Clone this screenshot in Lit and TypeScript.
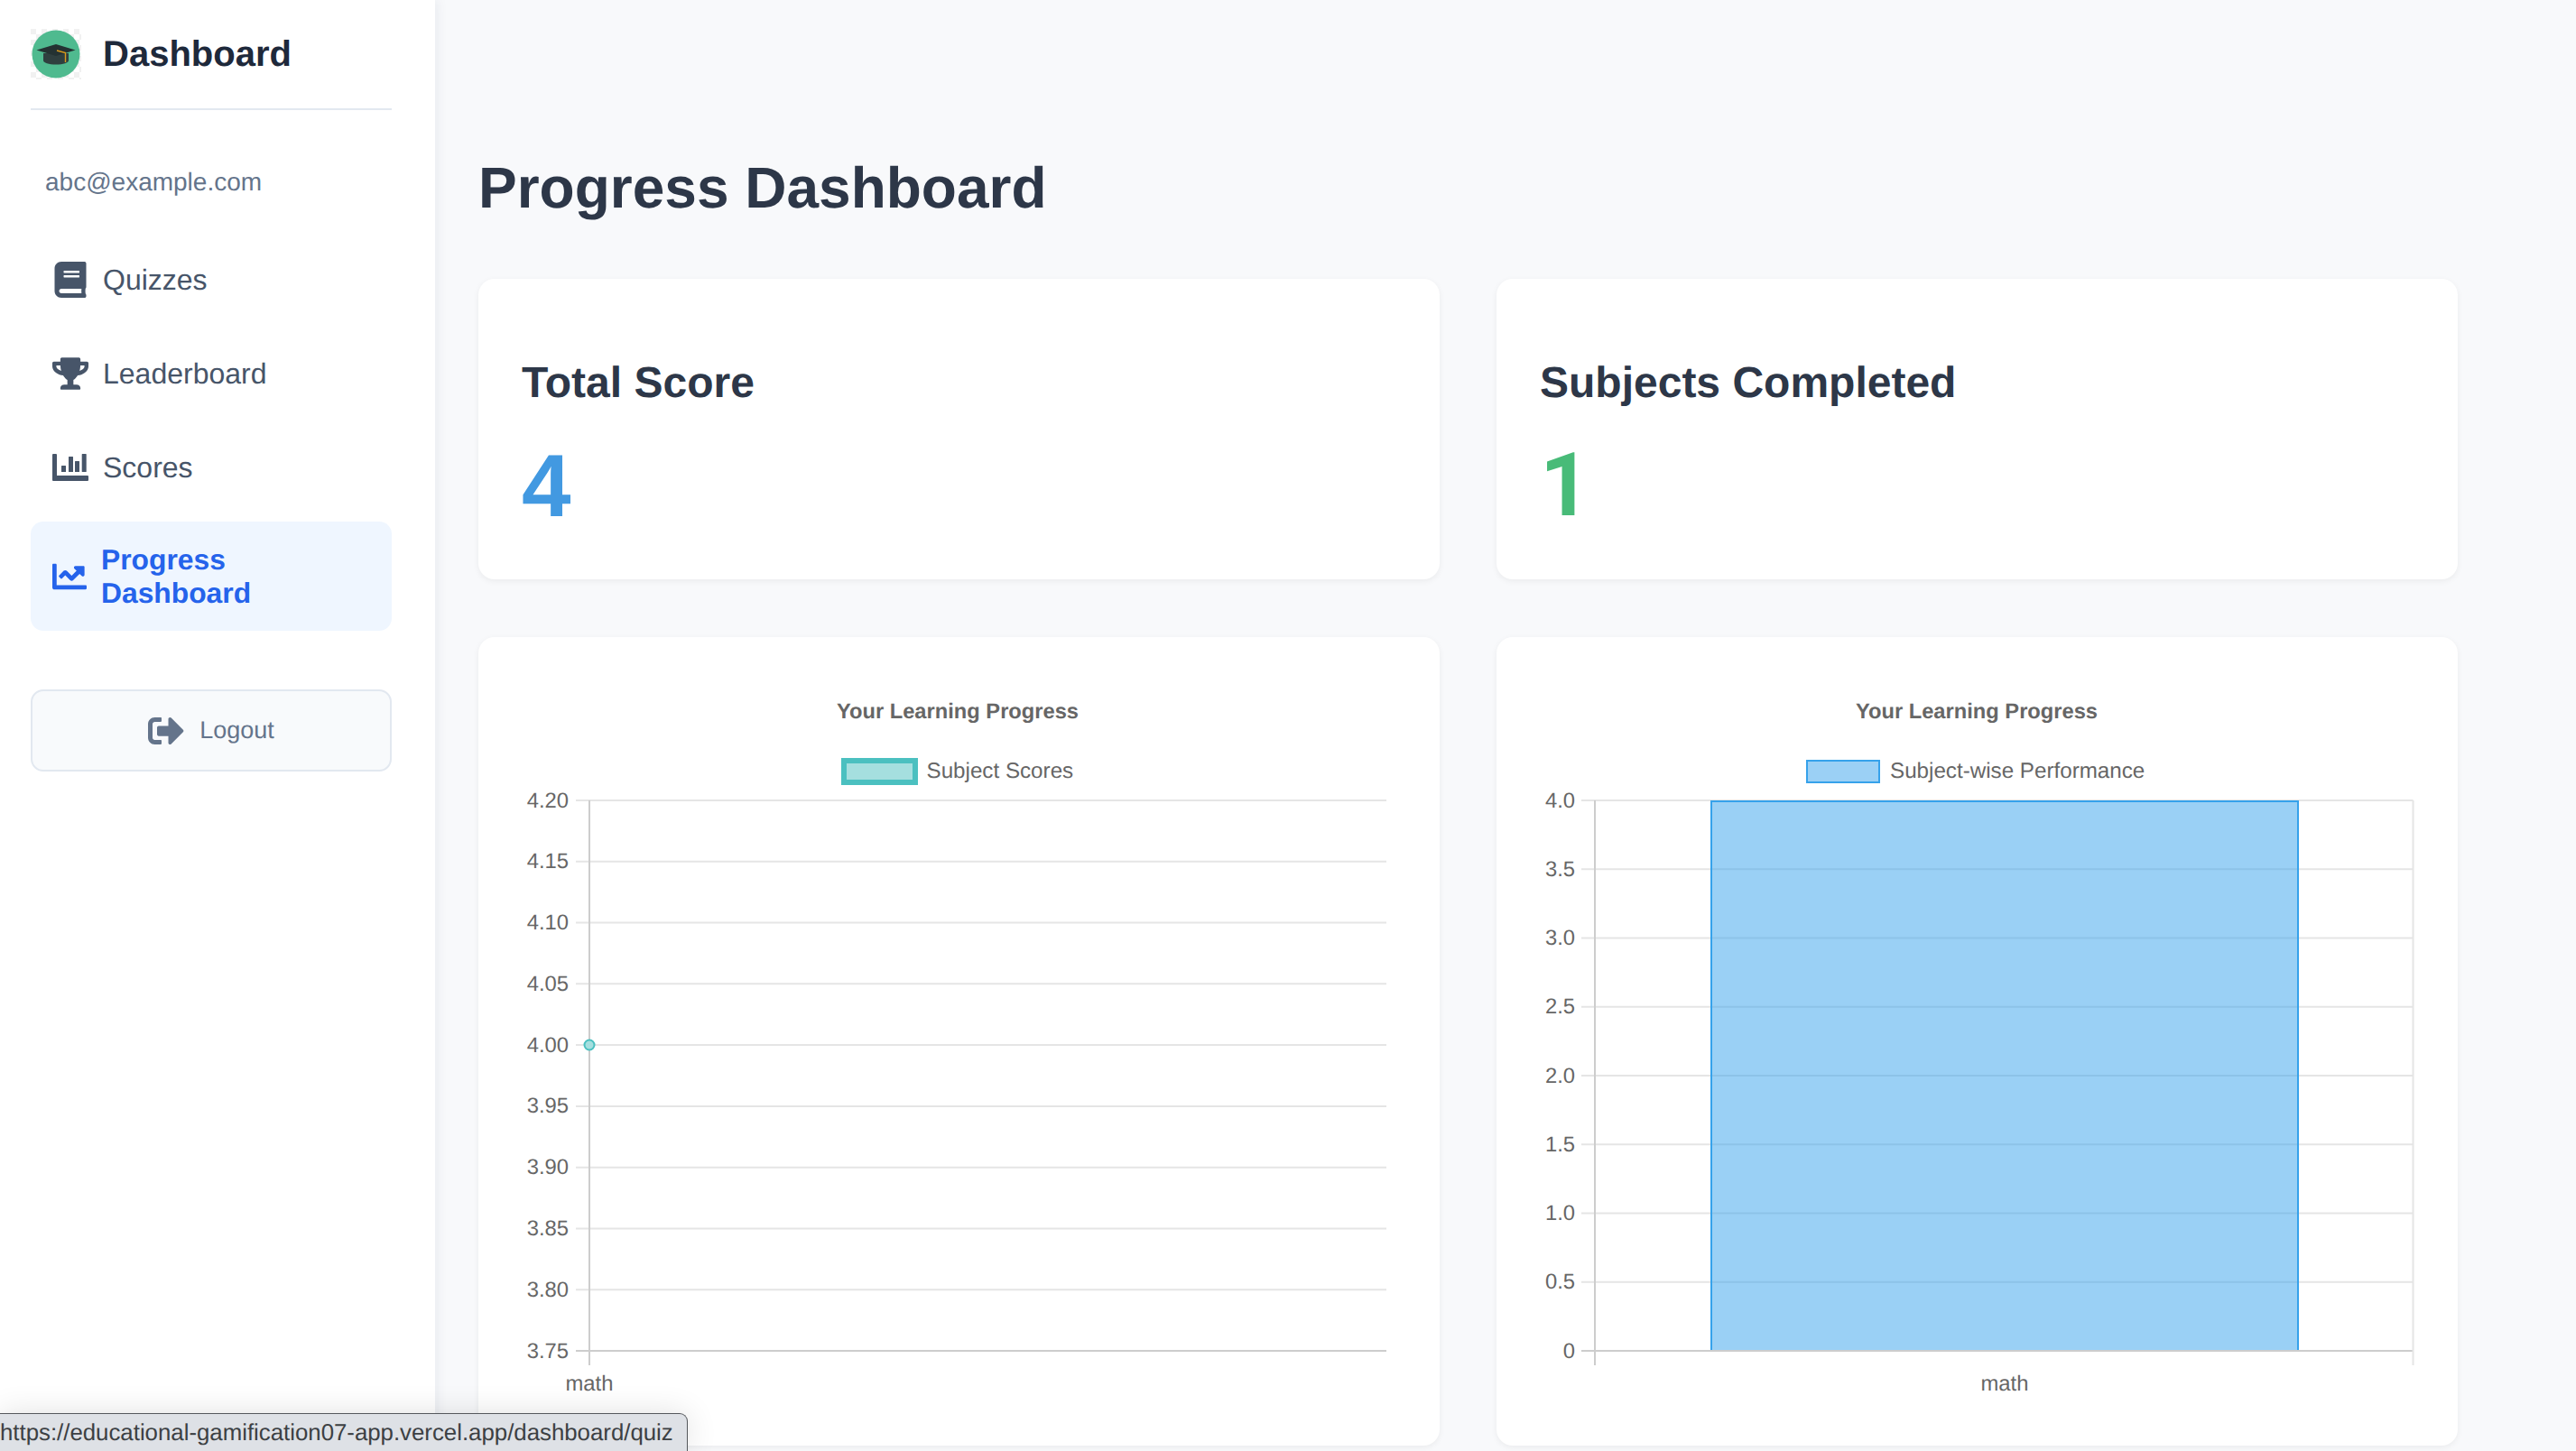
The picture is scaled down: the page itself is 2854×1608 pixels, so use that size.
import { LitElement, html, svg, css } from 'lit'

// icon paths, same shapes as the font-awesome set the sidebar uses
const ICONS = {
  book: ['0 0 448 512', 'M448 360V24c0-13.3-10.7-24-24-24H96C43 0 0 43 0 96v320c0 53 43 96 96 96h328c13.3 0 24-10.7 24-24v-16c0-7.5-3.5-14.3-8.9-18.7-4.2-15.4-4.2-59.3 0-74.7 5.4-4.3 8.9-11.1 8.9-18.6zM128 134c0-3.3 2.7-6 6-6h212c3.3 0 6 2.7 6 6v20c0 3.3-2.7 6-6 6H134c-3.3 0-6-2.7-6-6v-20zm0 64c0-3.3 2.7-6 6-6h212c3.3 0 6 2.7 6 6v20c0 3.3-2.7 6-6 6H134c-3.3 0-6-2.7-6-6v-20zm253.4 250H96c-17.7 0-32-14.3-32-32 0-17.6 14.4-32 32-32h285.4c-1.9 17.1-1.9 46.9 0 64z'],
  trophy: ['0 0 576 512', 'M552 64H448V24c0-13.3-10.7-24-24-24H152c-13.3 0-24 10.7-24 24v40H24C10.7 64 0 74.7 0 88v56c0 35.7 22.5 72.4 61.9 100.7 31.5 22.7 69.8 37.1 110 41.7C203.3 338.5 240 360 240 360v72h-48c-35.3 0-64 20.7-64 56v12c0 6.6 5.4 12 12 12h296c6.6 0 12-5.4 12-12v-12c0-35.3-28.7-56-64-56h-48v-72s36.7-21.5 68.1-73.6c40.3-4.6 78.7-19 110-41.7 39.3-28.3 61.9-65 61.9-100.7V88c0-13.3-10.7-24-24-24zM99.3 192.8C74.9 175.2 64 155.6 64 144v-16h64.2c1 32.6 5.8 61.2 12.8 86.2-15.1-5.2-29.2-12.4-41.7-21.4zM512 144c0 16.1-17.7 36.1-35.3 48.8-12.5 9-26.7 16.2-41.8 21.4 7-25 11.8-53.6 12.8-86.2H512v16z'],
  bars: ['0 0 40 40', 'M1 5h3a1 1 0 0 1 1 1v23h34a1 1 0 0 1 1 1v4a1 1 0 0 1-1 1H1a1 1 0 0 1-1-1V6a1 1 0 0 1 1-1zM10.500 18h4a.5.5 0 0 1 .5.5v6a.5.5 0 0 1-.5.5h-4a.5.5 0 0 1-.5-.5v-6a.5.5 0 0 1 .5-.5zM18.500 8h4a.5.5 0 0 1 .5.5v16a.5.5 0 0 1-.5.5h-4a.5.5 0 0 1-.5-.5v-16a.5.5 0 0 1 .5-.5zM25.500 13h4a.5.5 0 0 1 .5.5v11a.5.5 0 0 1-.5.5h-4a.5.5 0 0 1-.5-.5v-11a.5.5 0 0 1 .5-.5zM33.200 5h4a.5.5 0 0 1 .5.5v19a.5.5 0 0 1-.5.5h-4a.5.5 0 0 1-.5-.5v-19a.5.5 0 0 1 .5-.5z'],
  line: ['0 0 512 512', 'M496 384H64V80c0-8.84-7.16-16-16-16H16C7.16 64 0 71.16 0 80v336c0 17.67 14.33 32 32 32h464c8.84 0 16-7.16 16-16v-32c0-8.84-7.16-16-16-16zM464 96H345.94c-21.38 0-32.09 25.85-16.97 40.97l32.4 32.4L288 242.75l-73.37-73.37c-12.5-12.5-32.76-12.5-45.25 0l-68.69 68.69c-6.25 6.25-6.25 16.38 0 22.63l22.62 22.62c6.25 6.25 16.38 6.25 22.63 0L192 237.25l73.37 73.37c12.5 12.5 32.76 12.5 45.25 0l96-96 32.4 32.4c15.12 15.12 40.97 4.41 40.97-16.97V112c0-8.84-7.16-16-16-16z'],
  logout: ['0 0 512 512', 'M497 273L329 441c-15 15-41 4.500-41-17v-96H152c-13.3 0-24-10.7-24-24v-96c0-13.3 10.7-24 24-24h136V88c0-21.400 25.900-32 41-17l168 168c9.300 9.400 9.300 24.600 0 34zM192 436v-40c0-6.600-5.400-12-12-12H96c-17.700 0-32-14.300-32-32V160c0-17.700 14.300-32 32-32h84c6.600 0 12-5.400 12-12V76c0-6.600-5.400-12-12-12H96c-53 0-96 43-96 96v192c0 53 43 96 96 96h84c6.600 0 12-5.400 12-12z']
}

const icon = (name: keyof typeof ICONS, size = 40) => {
  const [box, d] = ICONS[name]
  return html`<svg class="icon" width=${size} height=${size} viewBox=${box} fill="currentColor"><path d=${d}></path></svg>`
}

// chart geometry is relative to the card
const CHARTS = [
  {
    left: 123, right: 1006, ticks: ['4.20', '4.15', '4.10', '4.05', '4.00', '3.95', '3.90', '3.85', '3.80', '3.75'],
    labelX: 100, tickX: 108, mathX: 123, titleX: 531,
    legend: { x: 402, y: 134, w: 85, h: 30, sw: 6, textX: 496.5, stroke: '#4bc0c0', fill: '#a5dfdf', label: 'Subject Scores' },
    dot: { x: 123, y: 452 }
  },
  {
    left: 109, right: 1015.5, ticks: ['4.0', '3.5', '3.0', '2.5', '2.0', '1.5', '1.0', '0.5', '0'],
    labelX: 87, tickX: 94, mathX: 563, titleX: 532,
    legend: { x: 343, y: 136, w: 82, h: 26, sw: 2, textX: 436, stroke: '#36a2eb', fill: '#9bd0f5', label: 'Subject-wise Performance' },
    bar: { x: 238, w: 650 }
  }
]

const TOP = 181
const BOTTOM = 791
const AXIS_END = 807

class AppRoot extends LitElement {
  static get styles () {
    return css`
      :host {
        display: flex;
        position: relative;
        width: 2854px;
        height: 1608px;
        overflow: hidden;
        background: #f8f9fb;
        font-family: "Liberation Sans", Arial, sans-serif;
        text-rendering: geometricPrecision;
      }

      .sidebar {
        flex: none;
        box-sizing: border-box;
        width: 482px;
        height: 100%;
        padding: 32px 48px 0 34px;
        background: #fff;
        box-shadow: 2px 0 12px rgba(30, 50, 90, 0.08);
      }

      .brand {
        display: flex;
        align-items: center;
        gap: 24px;
        height: 56px;
        padding-bottom: 32px;
        border-bottom: 2px solid #e2e8f0;
      }

      .brand span {
        font-size: 40px;
        font-weight: 700;
        color: #1e293b;
      }

      .email {
        margin: 62px 0 0 16px;
        font-size: 28px;
        line-height: 36px;
        color: #64748b;
      }

      nav {
        display: flex;
        flex-direction: column;
        gap: 18px;
        margin-top: 47px;
      }

      .item {
        display: flex;
        align-items: center;
        gap: 16px;
        padding: 23px 24px;
        border-radius: 14px;
        font-size: 32px;
        line-height: 37px;
        color: #475569;
      }

      .item.active {
        padding: 23.5px 24px;
        margin-top: -1px;
        background: #eff6ff;
        color: #2563eb;
        font-size: 31.8px;
        font-weight: 700;
      }

      .item.active .icon {
        width: 38px;
      }

      .icon {
        flex: none;
        display: block;
      }

      .logout {
        display: flex;
        align-items: center;
        justify-content: center;
        gap: 17px;
        box-sizing: border-box;
        height: 91px;
        margin-top: 65px;
        border: 2px solid #e2e8f0;
        border-radius: 14px;
        background: #f8fafc;
        font-size: 27px;
        color: #64748b;
      }

      main {
        flex: none;
        width: 2193px;
        margin-left: 48px;
      }

      h1 {
        margin: 170px 0 63px;
        font-size: 64px;
        line-height: 76px;
        font-weight: 700;
        color: #2d3748;
      }

      .grid {
        display: grid;
        grid-template-columns: 1065px 1065px;
        gap: 64px 63px;
      }

      .card {
        border-radius: 18px;
        background: #fff;
        box-shadow: 0 2px 7px rgba(0, 0, 0, 0.06);
      }

      .stat {
        box-sizing: border-box;
        height: 333px;
        padding: 87px 48px 0;
      }

      .stat h3 {
        margin: 0 0 30px;
        font-size: 48px;
        line-height: 57px;
        font-weight: 700;
        color: #2d3748;
      }

      .stat .value {
        font-size: 98px;
        line-height: 110px;
        font-weight: 700;
      }

      .blue { color: #4299e1; }

      /* Liberation's 1 has a foot, the reference one does not */
      .green {
        color: #48bb78;
        font-family: Roboto, sans-serif;
      }

      .chart {
        height: 896px;
      }

      .chart svg {
        display: block;
      }

      .chart text {
        font-family: "Liberation Sans", Arial, sans-serif;
        font-size: 23.8px;
        fill: #666;
      }

      .chart text.title {
        font-size: 23.7px;
        font-weight: 700;
      }

      .chart text.legend {
        font-size: 24.2px;
      }

      .status {
        position: absolute;
        left: 0;
        bottom: 0;
        box-sizing: border-box;
        width: 762px;
        height: 42px;
        border: 1.5px solid #55585c;
        border-width: 1.5px 1.5px 0 0;
        border-top-right-radius: 9px;
        background: #dee1e6;
        box-shadow: 0 0 34px rgba(0, 0, 0, 0.12);
        font-size: 25.8px;
        line-height: 42px;
        color: #3c4043;
        white-space: nowrap;
        overflow: hidden;
      }
    `
  }

  renderLogo () {
    return html`
      <svg width="56" height="56" viewBox="0 0 56 56">
        <defs>
          <pattern id="check" width="12" height="12" patternUnits="userSpaceOnUse">
            <rect width="6" height="6" fill="#f1f1f1"></rect>
            <rect x="6" y="6" width="6" height="6" fill="#f1f1f1"></rect>
          </pattern>
        </defs>
        <rect width="56" height="56" fill="url(#check)"></rect>
        <circle cx="28" cy="28" r="26.5" fill="#4fba8f"></circle>
        <path d="M14 27v8c0 2.5 6 4.5 14 4.5s14-2 14-4.5v-8z" fill="#2f3f3f"></path>
        <path d="M6.5 23.5 28 17l21.5 6.5L28 30z" fill="#243232"></path>
        <path d="M29 24l9.500 2.500V37" fill="none" stroke="#d99a1c" stroke-width="1.4"></path>
      </svg>
    `
  }

  renderChart (c: typeof CHARTS[number]) {
    const step = (BOTTOM - TOP) / (c.ticks.length - 1)
    return html`
      <div class="card chart">
        <svg width="1065" height="896" viewBox="0 0 1065 896">
          <text class="title" x=${c.titleX} y="90" text-anchor="middle">Your Learning Progress</text>
          <rect x=${c.legend.x + c.legend.sw / 2} y=${c.legend.y + c.legend.sw / 2}
            width=${c.legend.w - c.legend.sw} height=${c.legend.h - c.legend.sw}
            fill=${c.legend.fill} stroke=${c.legend.stroke} stroke-width=${c.legend.sw}></rect>
          <text class="legend" x=${c.legend.textX} y="156">${c.legend.label}</text>
          ${c.ticks.map((t, i) => {
            const y = TOP + step * i
            return svg`
              <line x1=${c.tickX} x2=${c.right} y1=${y} y2=${y} stroke-width="2"
                stroke=${i === c.ticks.length - 1 ? '#cdcdcd' : '#e5e5e5'}></line>
              <text x=${c.labelX} y=${y + 7.5} text-anchor="end">${t}</text>
            `
          })}
          <line x1=${c.left} x2=${c.left} y1=${TOP} y2=${AXIS_END} stroke="#cdcdcd" stroke-width="2"></line>
          ${c.bar
            ? svg`
              <line x1=${c.right} x2=${c.right} y1=${TOP} y2=${AXIS_END} stroke="#e5e5e5" stroke-width="2"></line>
              <rect x=${c.bar.x} y=${TOP + 1} width=${c.bar.w} height=${BOTTOM - TOP - 2} fill="rgba(54, 162, 235, 0.5)"></rect>
              <path d="M${c.bar.x} ${BOTTOM - 1}V${TOP + 1}H${c.bar.x + c.bar.w}V${BOTTOM - 1}" fill="none" stroke="#36a2eb" stroke-width="2"></path>
            `
            : ''}
          ${c.dot
            ? svg`<circle cx=${c.dot.x} cy=${c.dot.y} r="5.5" fill="#a5dfdf" stroke="#4bc0c0" stroke-width="2"></circle>`
            : ''}
          <text x=${c.mathX} y="835" text-anchor="middle">math</text>
        </svg>
      </div>
    `
  }

  render () {
    return html`
      <aside class="sidebar">
        <div class="brand">${this.renderLogo()}<span>Dashboard</span></div>
        <div class="email">abc@example.com</div>
        <nav>
          <div class="item">${icon('book')}<span>Quizzes</span></div>
          <div class="item">${icon('trophy')}<span>Leaderboard</span></div>
          <div class="item">${icon('bars')}<span>Scores</span></div>
          <div class="item active">${icon('line')}<span>Progress<br>Dashboard</span></div>
        </nav>
        <div class="logout">${icon('logout')}<span>Logout</span></div>
      </aside>
      <main>
        <h1>Progress Dashboard</h1>
        <div class="grid">
          <div class="card stat"><h3>Total Score</h3><div class="value blue">4</div></div>
          <div class="card stat"><h3>Subjects Completed</h3><div class="value green">1</div></div>
          ${CHARTS.map(c => this.renderChart(c))}
        </div>
      </main>
      <div class="status">https://educational-gamification07-app.vercel.app/dashboard/quiz</div>
    `
  }
}

customElements.define('app-root', AppRoot)
